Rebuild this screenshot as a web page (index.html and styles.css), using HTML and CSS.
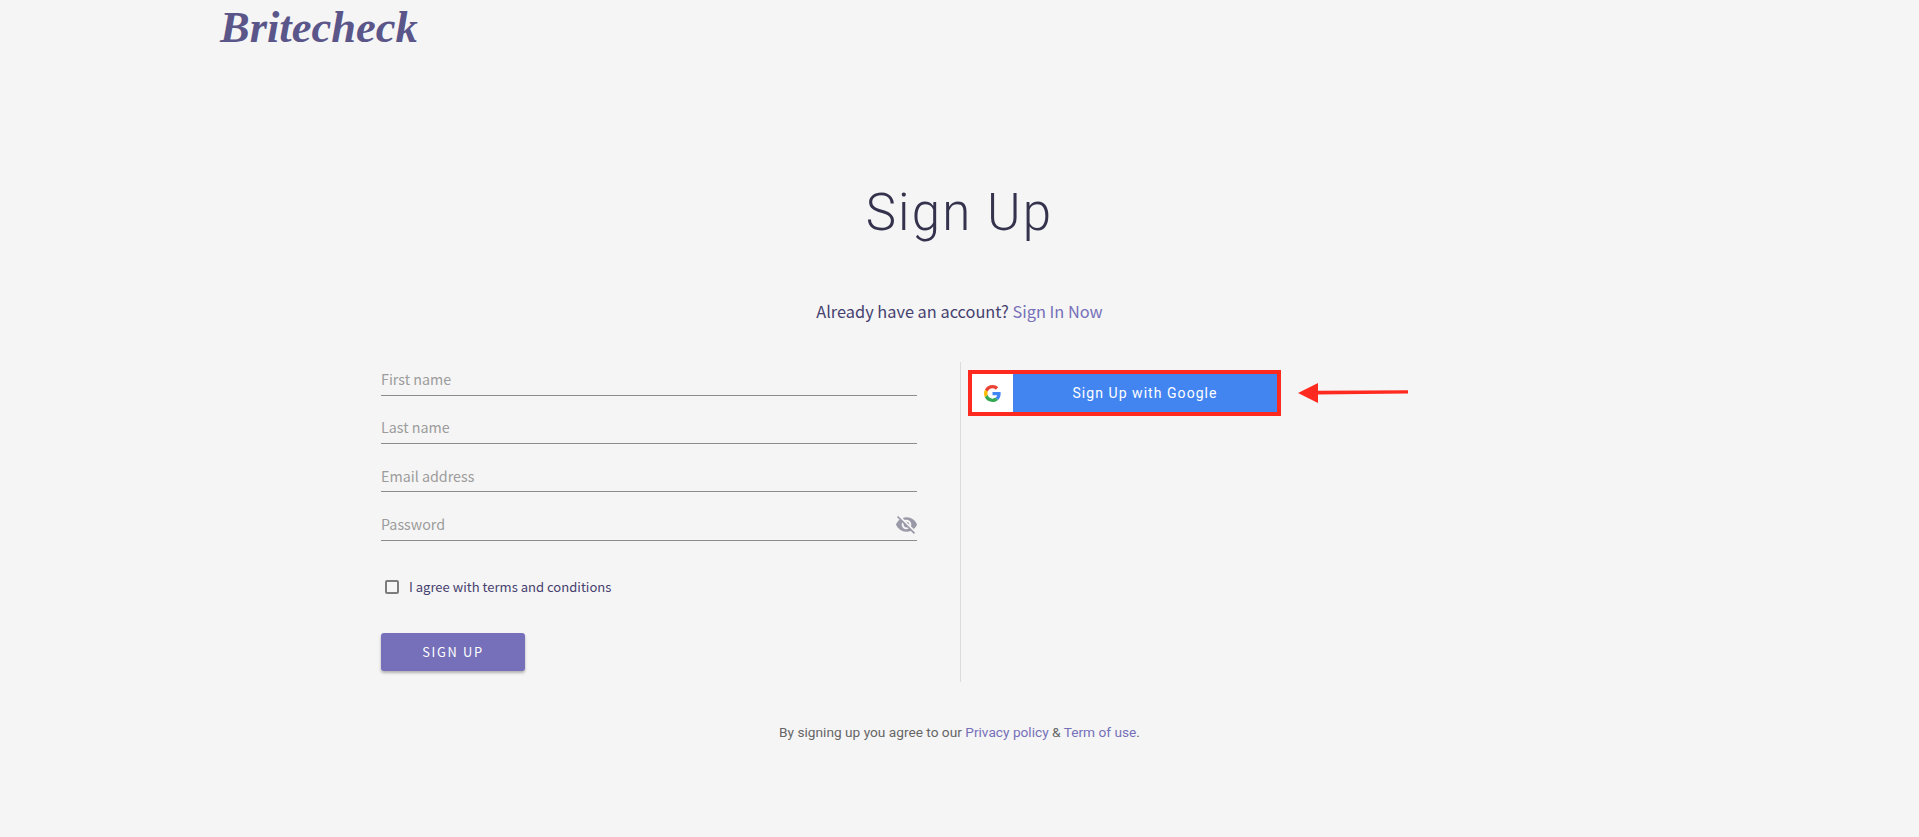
FILE: index.html
```html
<!DOCTYPE html>
<html lang="en">
<head>
<meta charset="utf-8">
<title>Sign Up</title>
<link rel="stylesheet" href="styles.css">
</head>
<body>
<header class="topbar"><a class="logo">Britecheck</a></header>
<main class="main">
  <h1 class="title">Sign Up</h1>
  <p class="already">Already have an account? <a class="link">Sign In Now</a></p>
  <div class="columns">
    <form class="form">
      <div class="field"><span class="placeholder">First name</span></div>
      <div class="field"><span class="placeholder">Last name</span></div>
      <div class="field"><span class="placeholder">Email address</span></div>
      <div class="field"><span class="placeholder">Password</span>
        <svg class="eye" viewBox="0 0 24 24" width="23" height="23"><path fill="#9a99a8" d="M12 7c2.76 0 5 2.24 5 5 0 .65-.13 1.26-.36 1.83l2.92 2.92c1.51-1.26 2.7-2.89 3.43-4.75-1.73-4.39-6-7.5-11-7.5-1.4 0-2.74.25-3.98.7l2.16 2.16C10.74 7.13 11.35 7 12 7zM2 4.27l2.28 2.28.46.46C3.08 8.3 1.78 10.02 1 12c1.73 4.39 6 7.5 11 7.5 1.55 0 3.03-.3 4.38-.84l.42.42L19.73 22 21 20.73 3.27 3 2 4.27zM7.53 9.8l1.55 1.55c-.05.21-.08.43-.08.65 0 1.66 1.34 3 3 3 .22 0 .44-.03.65-.08l1.55 1.55c-.67.33-1.41.53-2.2.53-2.76 0-5-2.24-5-5 0-.79.2-1.53.53-2.2zm4.31-.78l3.15 3.15.02-.16c0-1.66-1.34-3-3-3l-.17.01z"/></svg>
      </div>
      <label class="agree"><span class="box"></span><span class="agree-text">I agree with terms and conditions</span></label>
      <button class="submit" type="button">SIGN UP</button>
    </form>
    <div class="side">
      <div class="google-wrap">
        <button class="google" type="button">
          <span class="g-icon"><svg viewBox="0 0 48 48" width="17" height="17"><path fill="#EA4335" d="M24 9.5c3.54 0 6.71 1.22 9.21 3.6l6.85-6.85C35.9 2.38 30.47 0 24 0 14.62 0 6.51 5.38 2.56 13.22l7.98 6.19C12.43 13.72 17.74 9.5 24 9.5z"/><path fill="#4285F4" d="M46.98 24.55c0-1.57-.15-3.09-.38-4.55H24v9.02h12.94c-.58 2.96-2.26 5.48-4.78 7.18l7.73 6c4.51-4.18 7.09-10.36 7.09-17.65z"/><path fill="#FBBC05" d="M10.53 28.59c-.48-1.45-.76-2.99-.76-4.59s.27-3.14.76-4.59l-7.98-6.19C.92 16.46 0 20.12 0 24c0 3.88.92 7.54 2.56 10.78l7.97-6.19z"/><path fill="#34A853" d="M24 48c6.48 0 11.93-2.13 15.89-5.81l-7.73-6c-2.15 1.45-4.92 2.3-8.16 2.3-6.26 0-11.57-4.22-13.47-9.91l-7.98 6.19C6.51 42.62 14.62 48 24 48z"/></svg></span>
          <span class="g-label">Sign Up with Google</span>
        </button>
        <svg class="arrow" viewBox="0 0 112 22" width="112" height="22"><path fill="#ff2a1f" d="M0 11 20 1V8.7L110 8.2V11.6L20 12.6V21Z"/></svg>
      </div>
    </div>
  </div>
  <p class="legal">By signing up you agree to our <a class="link">Privacy policy</a> &amp; <a class="link">Term of use</a>.</p>
</main>
</body>
</html>
```
FILE: styles.css
```css
* { box-sizing: border-box; }
html, body { margin: 0; height: 100%; }
body {
  background: #f5f5f5;
  color: #2f2c52;
  font-family: "Noto Sans CJK SC", "Noto Sans", sans-serif;
  overflow: hidden;
}
.topbar { height: 52px; padding-left: 220px; }
.logo {
  display: block;
  font-family: "Liberation Serif", serif;
  font-style: italic;
  font-weight: 700;
  font-size: 44.5px;
  line-height: 54px;
  color: #5b5689;
}
.main { display: flex; flex-direction: column; align-items: center; }
.title {
  margin: 129.5px 0 0;
  font-family: Roboto, sans-serif;
  font-weight: 300;
  font-size: 51px;
  line-height: 62px;
  letter-spacing: 2.2px;
  color: #34324c;
}
.already {
  margin: 55px 0 0;
  font-size: 16.35px;
  line-height: 24px;
  color: #45416f;
}
.link { color: #7570b9; }
.columns { display: flex; width: 1157px; margin-top: 39px; }
.form {
  width: 580px;
  height: 320.5px;
  padding: 0 43px 0 0;
  border-right: 1px solid #dcdcdc;
}
.field {
  display: flex;
  align-items: center;
  justify-content: space-between;
  height: 34px;
  margin-bottom: 14.4px;
  border-bottom: 1px solid #8c8c8c;
}
.placeholder { font-size: 14.3px; line-height: 22px; color: #9c9c9c; padding-top: 2px; }
.eye { margin-right: -1px; margin-top: 2px; }
.agree { display: flex; align-items: center; margin: 35.6px 0 0 4px; }
.box {
  width: 14px;
  height: 14px;
  border: 2px solid #7c7c7c;
  border-radius: 2px;
  margin-right: 10px;
}
.agree-text { font-size: 13.05px; line-height: 22px; color: #45416f; }
.submit {
  display: block;
  width: 144px;
  height: 38px;
  margin-top: 34.6px;
  border: 0;
  border-radius: 3px;
  background: #7570b9;
  color: #fff;
  font-family: inherit;
  font-size: 12.8px;
  letter-spacing: 1.7px;
  box-shadow: 0 2px 3px rgba(0, 0, 0, .28);
}
.side { padding: 8.5px 0 0 7px; }
.google-wrap { display: flex; align-items: center; }
.google {
  display: flex;
  width: 313px;
  height: 46px;
  padding: 0;
  border: 4px solid #ff2a1f;
  background: #4285f0;
}
.g-icon {
  display: flex;
  align-items: center;
  justify-content: center;
  width: 41px;
  height: 100%;
  background: #fff;
}
.g-label {
  flex: 1;
  text-align: center;
  font-family: Roboto, sans-serif;
  font-size: 14px;
  line-height: 38px;
  letter-spacing: 1.05px;
  color: #fff;
}
.arrow { margin-left: 17px; }
.legal {
  margin: 39.5px 0 0;
  font-family: Roboto, sans-serif;
  font-size: 13.7px;
  line-height: 20px;
  color: #666;
}
```
